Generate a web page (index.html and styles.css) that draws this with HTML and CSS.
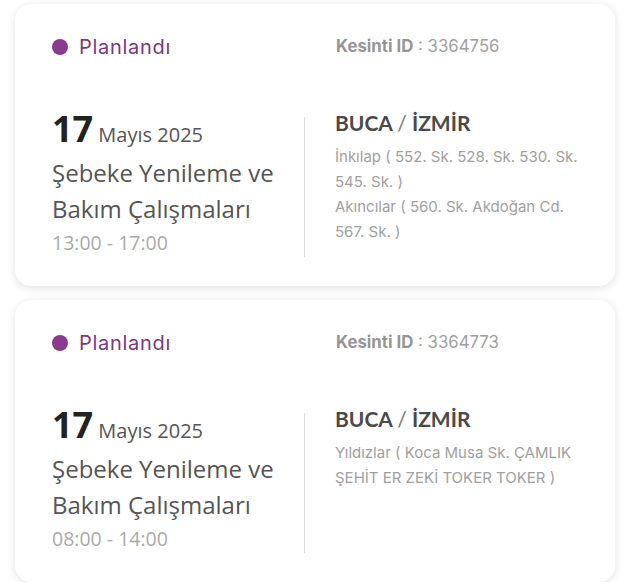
FILE: index.html
```html
<!DOCTYPE html>
<html lang="tr">
<head>
<meta charset="utf-8">
<title>Kesintiler</title>
<link rel="stylesheet" href="styles.css">
</head>
<body>
<div class="list">
  <div class="card">
    <div class="head">
      <div class="status"><span class="dot"></span>Planlandı</div>
      <div class="kid"><b>Kesinti ID</b> : 3364756</div>
    </div>
    <div class="main">
      <div class="left">
        <div class="date"><span class="day">17</span> Mayıs 2025</div>
        <div class="title">Şebeke Yenileme ve Bakım Çalışmaları</div>
        <div class="time">13:00 - 17:00</div>
      </div>
      <div class="right">
        <div class="place">BUCA <span class="sep">/</span> İZMİR</div>
        <div class="addr">İnkılap ( 552. Sk. 528. Sk. 530. Sk. 545. Sk. )</div>
        <div class="addr">Akıncılar ( 560. Sk. Akdoğan Cd. 567. Sk. )</div>
      </div>
    </div>
  </div>
  <div class="card">
    <div class="head">
      <div class="status"><span class="dot"></span>Planlandı</div>
      <div class="kid"><b>Kesinti ID</b> : 3364773</div>
    </div>
    <div class="main">
      <div class="left">
        <div class="date"><span class="day">17</span> Mayıs 2025</div>
        <div class="title">Şebeke Yenileme ve Bakım Çalışmaları</div>
        <div class="time">08:00 - 14:00</div>
      </div>
      <div class="right">
        <div class="place">BUCA <span class="sep">/</span> İZMİR</div>
        <div class="addr">Yıldızlar ( Koca Musa Sk. ÇAMLIK ŞEHİT ER ZEKİ TOKER TOKER )</div>
      </div>
    </div>
  </div>
</div>
</body>
</html>
```

FILE: styles.css
```css
* { box-sizing: border-box; }
html, body { margin: 0; background: #ffffff; }
body { padding: 4px 16px 0 15px; }
.list { display: flex; flex-direction: column; gap: 14px; }
.card {
  background: #fff;
  border-radius: 16px;
  box-shadow: 0 2px 10px rgba(0,0,0,0.12);
  padding: 31px 36px 29px 37px;
}
.head { display: grid; grid-template-columns: 284px 1fr; height: 24px; margin-bottom: 58px; }
.status {
  display: flex; align-items: center;
  font-family: "Inter", sans-serif; font-size: 20px; line-height: 24px;
  letter-spacing: 0.7px;
  color: #7d3585;
}
.dot { width: 16px; height: 16px; border-radius: 50%; background: #8a3b90; margin-right: 11px; }
.kid { font-family: "Inter", sans-serif; font-size: 16.8px; line-height: 22px; color: #a0a0a0; }
.kid b { font-weight: 700; color: #969696; }
.main { display: grid; grid-template-columns: 253px 1fr; }
.left { border-right: 1px solid #dcdcdc; font-family: "Open Sans", sans-serif; padding-bottom: 2px; }
.date { font-size: 20px; line-height: 24px; color: #555; }
.day { font-size: 36px; font-weight: 700; color: #222; }
.title { font-size: 24px; line-height: 36px; color: #555; margin-top: 8px; padding-right: 10px; }
.time { font-size: 19.5px; line-height: 24px; color: #aaaaaa; margin-top: 4px; }
.right { padding-left: 30px; font-family: "Inter", sans-serif; }
.place { font-family: "Lato", sans-serif; font-size: 21px; font-weight: 700; line-height: 24px; color: #4a4a4a; margin-top: -6px; margin-bottom: 9px; }
.sep { font-weight: 400; color: #777; }
.addr { font-size: 15px; line-height: 25px; color: #a0a0a0; }
```
